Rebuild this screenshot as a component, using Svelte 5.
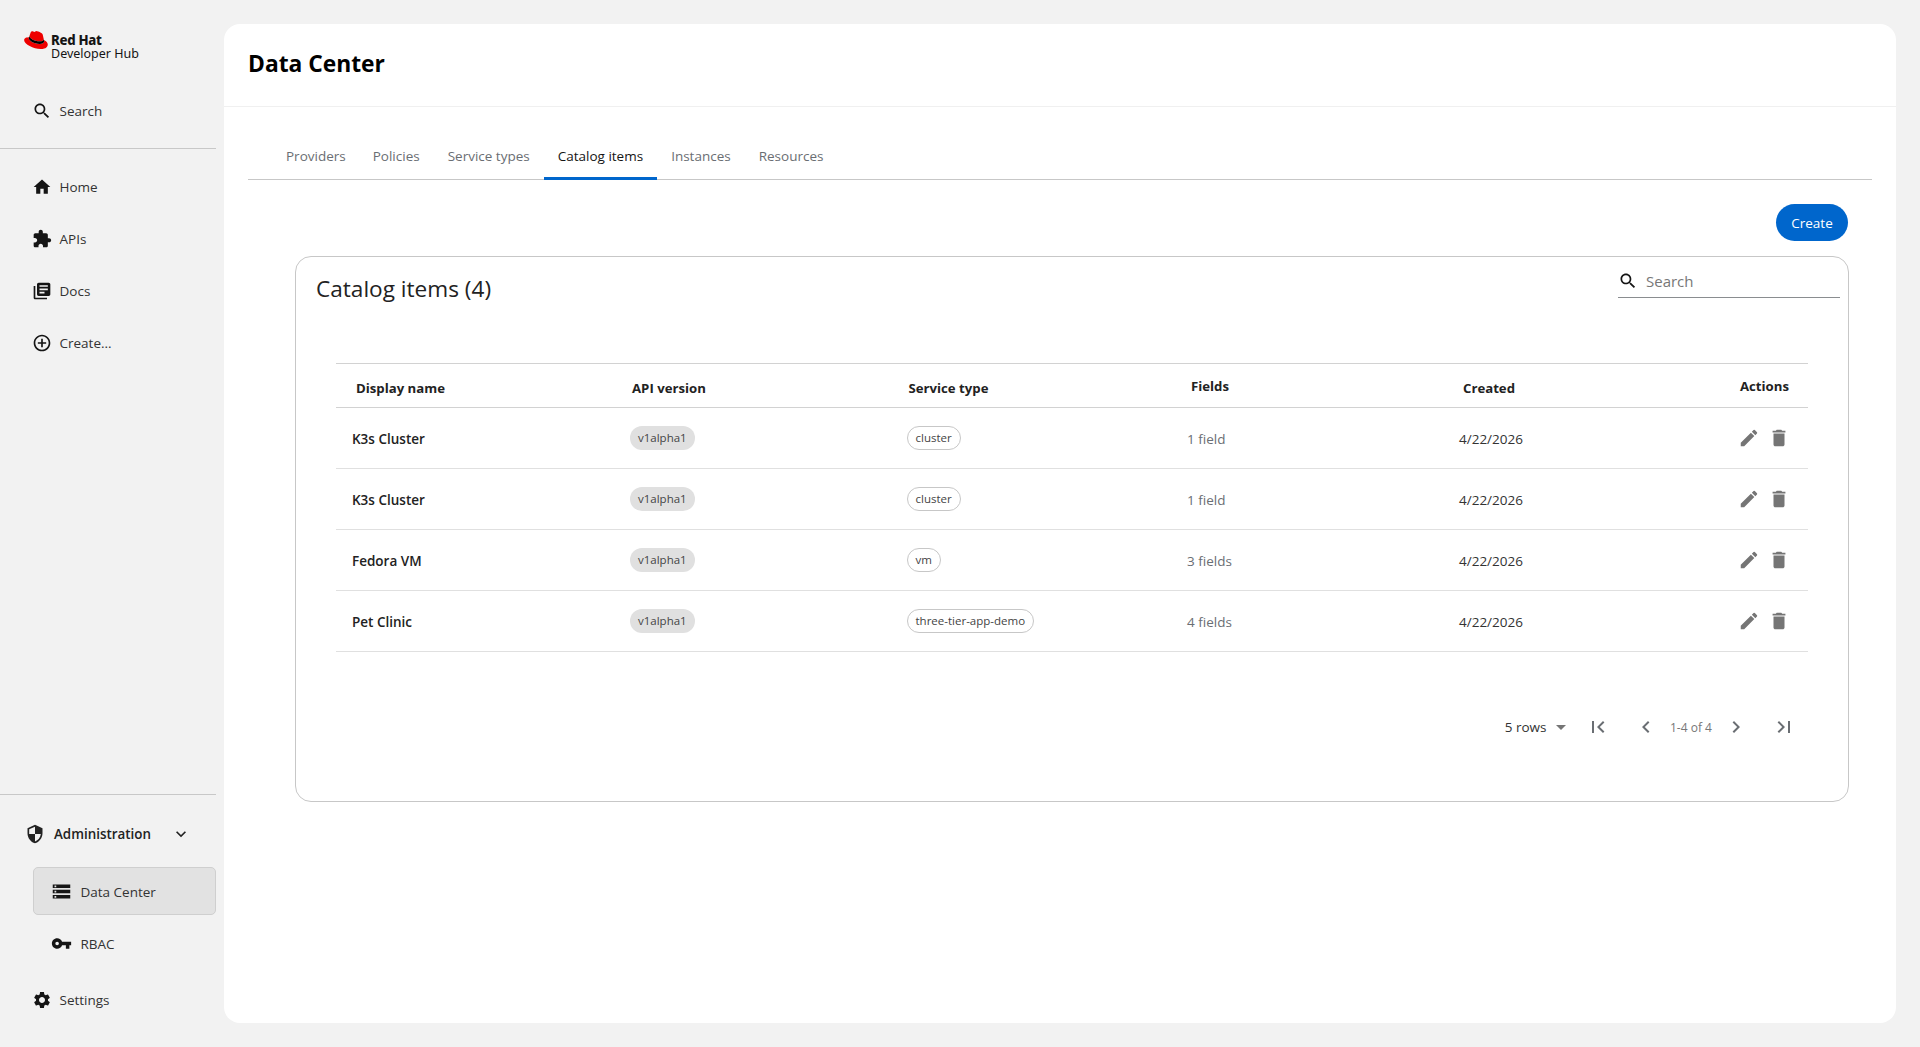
<script>
  const icons = {
    search: 'M15.5 14h-.79l-.28-.27C15.41 12.59 16 11.11 16 9.5 16 5.91 13.09 3 9.5 3S3 5.91 3 9.5 5.91 16 9.5 16c1.61 0 3.09-.59 4.23-1.57l.27.28v.79l5 4.99L20.49 19l-4.99-5zm-6 0C7.01 14 5 11.99 5 9.5S7.01 5 9.5 5 14 7.01 14 9.5 11.99 14 9.5 14z',
    home: 'M10 20v-6h4v6h5v-8h3L12 3 2 12h3v8z',
    puzzle: 'M20.5 11H19V7c0-1.1-.9-2-2-2h-4V3.5C13 2.12 11.88 1 10.5 1S8 2.12 8 3.5V5H4c-1.1 0-1.99.9-1.99 2v3.8H3.5c1.49 0 2.7 1.21 2.7 2.7s-1.21 2.7-2.7 2.7H2V20c0 1.1.9 2 2 2h3.8v-1.5c0-1.49 1.21-2.7 2.7-2.7 1.49 0 2.7 1.21 2.7 2.7V22H17c1.1 0 2-.9 2-2v-4h1.5c1.38 0 2.5-1.12 2.5-2.5S21.88 11 20.5 11z',
    docs: 'M4 6H2v14c0 1.1.9 2 2 2h14v-2H4V6zm16-4H8c-1.1 0-2 .9-2 2v12c0 1.1.9 2 2 2h12c1.1 0 2-.9 2-2V4c0-1.1-.9-2-2-2zm-1 9H9V9h10v2zm-4 4H9v-2h6v2zm4-8H9V5h10v2z',
    add: 'M13 7h-2v4H7v2h4v4h2v-4h4v-2h-4V7zm-1-5C6.48 2 2 6.48 2 12s4.48 10 10 10 10-4.48 10-10S17.52 2 12 2zm0 18c-4.41 0-8-3.59-8-8s3.59-8 8-8 8 3.59 8 8-3.59 8-8 8z',
    shield: 'M12 1L3 5v6c0 5.55 3.84 10.74 9 12 5.16-1.26 9-6.45 9-12V5l-9-4zm0 10.99h7c-.53 4.12-3.28 7.79-7 8.94V12H5V6.3l7-3.11v8.8z',
    expand: 'M16.59 8.59L12 13.17 7.41 8.59 6 10l6 6 6-6z',
    storage: 'M2 20h20v-4H2v4zm2-3h2v2H4v-2zM2 4v4h20V4H2zm4 3H4V5h2v2zm-4 7h20v-4H2v4zm2-3h2v2H4v-2z',
    key: 'M12.65 10C11.83 7.67 9.61 6 7 6c-3.31 0-6 2.69-6 6s2.69 6 6 6c2.61 0 4.83-1.67 5.65-4H17v4h4v-4h2v-4H12.65zM7 14c-1.1 0-2-.9-2-2s.9-2 2-2 2 .9 2 2-.9 2-2 2z',
    settings: 'M19.14 12.94c.04-.3.06-.61.06-.94 0-.32-.02-.64-.07-.94l2.03-1.58c.18-.14.23-.41.12-.61l-1.92-3.32c-.12-.22-.37-.29-.59-.22l-2.39.96c-.5-.38-1.03-.7-1.62-.94l-.36-2.54c-.04-.24-.24-.41-.48-.41h-3.84c-.24 0-.43.17-.47.41l-.36 2.54c-.59.24-1.13.57-1.62.94l-2.39-.96c-.22-.08-.47 0-.59.22L2.74 8.87c-.12.21-.08.47.12.61l2.03 1.58c-.05.3-.09.63-.09.94s.02.64.07.94l-2.03 1.58c-.18.14-.23.41-.12.61l1.92 3.32c.12.22.37.29.59.22l2.39-.96c.5.38 1.03.7 1.62.94l.36 2.54c.05.24.24.41.48.41h3.84c.24 0 .44-.17.47-.41l.36-2.54c.59-.24 1.13-.56 1.62-.94l2.39.96c.22.08.47 0 .59-.22l1.92-3.32c.12-.22.07-.47-.12-.61l-2.01-1.58zM12 15.6c-1.98 0-3.6-1.62-3.6-3.6s1.62-3.6 3.6-3.6 3.6 1.62 3.6 3.6-1.62 3.6-3.6 3.6z',
    edit: 'M3 17.25V21h3.75L17.81 9.94l-3.75-3.75L3 17.25zM20.71 7.04c.39-.39.39-1.02 0-1.41l-2.34-2.34a.9959.9959 0 0 0-1.41 0l-1.83 1.83 3.75 3.75 1.83-1.83z',
    trash: 'M6 19c0 1.1.9 2 2 2h8c1.1 0 2-.9 2-2V7H6v12zM19 4h-3.5l-1-1h-5l-1 1H5v2h14V4z',
    first: 'M18.41 16.59L13.82 12l4.59-4.59L17 6l-6 6 6 6zM6 6h2v12H6z',
    last: 'M5.59 7.41L10.18 12l-4.59 4.59L7 18l6-6-6-6zM16 6h2v12h-2z',
    prev: 'M15.41 7.41L14 6l-6 6 6 6 1.41-1.41L10.83 12z',
    next: 'M10 6L8.59 7.41 13.17 12l-4.58 4.59L10 18l6-6z',
    caret: 'M7 10l5 5 5-5z',
  };

  const navTop = [
    { label: 'Home', icon: 'home' },
    { label: 'APIs', icon: 'puzzle' },
    { label: 'Docs', icon: 'docs' },
    { label: 'Create...', icon: 'add' },
  ];

  const tabs = ['Providers', 'Policies', 'Service types', 'Catalog items', 'Instances', 'Resources'];

  const rows = [
    { name: 'K3s Cluster', type: 'cluster', fields: '1 field' },
    { name: 'K3s Cluster', type: 'cluster', fields: '1 field' },
    { name: 'Fedora VM', type: 'vm', fields: '3 fields' },
    { name: 'Pet Clinic', type: 'three-tier-app-demo', fields: '4 fields' },
  ];
</script>

{#snippet icon(name, size = 20)}
  <svg class="icon" width={size} height={size} viewBox="0 0 24 24" aria-hidden="true">
    <path d={icons[name]} />
  </svg>
{/snippet}

<div class="page">
  <nav class="nav">
    <div class="logo">
      <svg width="24" height="18" viewBox="0 0 192 145" aria-hidden="true">
        <path fill="#e00" d="M127.47 83.49c12.51 0 30.61-2.58 30.61-17.46a14 14 0 0 0-.31-3.42l-7.45-32.36c-1.72-7.12-3.23-10.35-15.73-16.6C124.89 8.69 103.76.5 97.51.5 91.69.5 90 8 83.06 8c-6.68 0-11.64-5.6-17.89-5.6-6 0-9.91 4.09-12.93 12.5 0 0-8.41 23.72-9.49 27.16A6.43 6.43 0 0 0 42.53 44c0 9.22 36.3 39.45 84.94 39.45M160 72.07c1.73 8.19 1.73 9.05 1.73 10.13 0 14-15.74 21.77-36.43 21.77C78.54 104 37.58 76.6 37.58 58.49a18.45 18.45 0 0 1 1.51-7.33C22.27 52 .5 54.3.5 74.22c0 31.48 74.59 70.28 133.65 70.28 45.28 0 56.7-20.48 56.7-36.65 0-12.72-11-27.16-30.83-35.78" />
        <path fill="#000" d="M160 72.07c1.73 8.19 1.73 9.05 1.73 10.13 0 14-15.74 21.77-36.43 21.77C78.54 104 37.58 76.6 37.58 58.49a18.45 18.45 0 0 1 1.51-7.33l3.66-9.06A6.43 6.43 0 0 0 42.53 44c0 9.22 36.3 39.45 84.94 39.45 12.51 0 30.61-2.58 30.61-17.46a14 14 0 0 0-.31-3.42Z" />
      </svg>
      <div class="logo__text">
        <span class="logo__brand">Red Hat</span>
        <span>Developer Hub</span>
      </div>
    </div>

    <div class="nav__item nav__search">
      {@render icon('search')}
      <span>Search</span>
    </div>

    <div class="nav__top">
      {#each navTop as item}
        <div class="nav__item">
          {@render icon(item.icon)}
          <span>{item.label}</span>
        </div>
      {/each}
    </div>

    <div class="nav__bottom">
      <div class="nav__admin">
        {@render icon('shield', 20)}
        <span>Administration</span>
        {@render icon('expand', 20)}
      </div>
      <div class="nav__sub nav__sub--active">
        {@render icon('storage', 21)}
        <span>Data Center</span>
      </div>
      <div class="nav__sub">
        {@render icon('key', 21)}
        <span>RBAC</span>
      </div>
      <div class="nav__item nav__settings">
        {@render icon('settings')}
        <span>Settings</span>
      </div>
    </div>
  </nav>

  <main class="main">
    <header class="main__header">
      <h1>Data Center</h1>
    </header>

    <div class="content">
      <div class="tabs">
        {#each tabs as tab}
          <div class="tab" class:tab--active={tab === 'Catalog items'}>{tab}</div>
        {/each}
      </div>

      <div class="toolbar">
        <button class="create">Create</button>
      </div>

      <section class="card">
        <div class="card__head">
          <h2>Catalog items (4)</h2>
          <div class="search">
            {@render icon('search', 20)}
            <span>Search</span>
          </div>
        </div>

        <div class="table">
          <div class="row row--head">
            <div class="th">Display name</div>
            <div class="th th--tight">API version</div>
            <div class="th th--tight">Service type</div>
            <div class="th th--up">Fields</div>
            <div class="th">Created</div>
            <div class="th th--up th--end">Actions</div>
          </div>
          {#each rows as row}
            <div class="row">
              <div class="cell cell--name">{row.name}</div>
              <div class="cell"><span class="chip chip--filled">v1alpha1</span></div>
              <div class="cell"><span class="chip chip--outline">{row.type}</span></div>
              <div class="cell cell--muted">{row.fields}</div>
              <div class="cell">4/22/2026</div>
              <div class="cell cell--actions">
                {@render icon('edit', 22)}
                {@render icon('trash', 22)}
              </div>
            </div>
          {/each}
        </div>

        <div class="pager">
          <div class="pager__select">
            <span>5 rows</span>
            {@render icon('caret', 24)}
          </div>
          <div class="pager__btn">{@render icon('first', 24)}</div>
          <div class="pager__btn">{@render icon('prev', 24)}</div>
          <span class="pager__count">1-4 of 4</span>
          <div class="pager__btn">{@render icon('next', 24)}</div>
          <div class="pager__btn">{@render icon('last', 24)}</div>
        </div>
      </section>
    </div>
  </main>
</div>

<style>
  :global(body) {
    margin: 0;
    background: #f2f2f2;
    color: #151515;
    font-family: 'Open Sans', 'Noto Sans', sans-serif;
    font-size: 13.5px;
  }

  * {
    box-sizing: border-box;
  }

  .icon {
    display: block;
    flex: none;
    fill: currentColor;
  }

  .page {
    display: flex;
    height: 1047px;
    overflow: hidden;
  }

  .nav {
    display: flex;
    flex-direction: column;
    flex: none;
    width: 216px;
    margin-right: 8px;
    color: #222;
  }

  .logo {
    display: flex;
    align-items: flex-start;
    gap: 3px;
    height: 87px;
    padding: 31px 0 0 24px;
  }

  .logo__text {
    display: flex;
    flex-direction: column;
    margin-top: 2px;
    font-family: 'Noto Sans', sans-serif;
    font-size: 12.5px;
    line-height: 14px;
    color: #151515;
  }

  .logo__brand {
    font-size: 13.2px;
    font-weight: 800;
    letter-spacing: -0.3px;
  }

  .nav__item {
    display: flex;
    align-items: center;
    gap: 7.5px;
    height: 52px;
    padding-left: 32px;
    color: #333;
  }

  .nav__item .icon {
    color: #151515;
  }

  .nav__search {
    height: 48px;
  }

  .nav__top {
    flex: 1;
    margin-top: 13px;
    padding-top: 12px;
    border-top: 1px solid #c8c8c8;
  }

  .nav__bottom {
    border-top: 1px solid #c8c8c8;
    padding-bottom: 22px;
  }

  .nav__admin {
    display: flex;
    align-items: center;
    height: 72px;
    padding: 6px 0 0 25px;
    font-weight: 600;
    color: #222;
  }

  .nav__admin span {
    width: 117px;
    margin-left: 9px;
    font-size: 13.4px;
  }

  .nav__sub {
    display: flex;
    align-items: center;
    gap: 9px;
    height: 48px;
    margin: 0 0 4px 33px;
    padding: 1px 0 0 16.5px;
    border: 1px solid transparent;
    border-radius: 5px;
    color: #333;
  }

  .nav__sub .icon {
    color: #151515;
  }

  .nav__sub--active {
    background: #e2e2e2;
    border-color: #cfcfcf;
  }

  .nav__settings {
    margin-top: 6px;
    padding-top: 2px;
  }

  .main {
    flex: 1;
    margin: 24px 24px 24px 0;
    background: #fff;
    border-radius: 16px;
    overflow: hidden;
  }

  .main__header {
    display: flex;
    align-items: center;
    height: 83px;
    padding: 0 24px;
    border-bottom: 1px solid #f0f0f0;
  }

  h1 {
    margin: 0 0 4px;
    font-size: 22.8px;
    font-weight: 700;
    color: #000;
  }

  .content {
    padding: 0 24px;
  }

  .tabs {
    display: flex;
    margin-top: 27px;
    padding-left: 24px;
    height: 46px;
    border-bottom: 1px solid #c7c7c7;
  }

  .tab {
    display: flex;
    align-items: center;
    height: 46px;
    padding: 0 14px 2px;
    color: #6a6e73;
  }

  .tab:first-child {
    padding-right: 13px;
  }

  .tab--active {
    padding-bottom: 0;
    color: #151515;
    border-bottom: 3px solid #0066cc;
  }

  .toolbar {
    display: flex;
    justify-content: flex-end;
    padding-top: 24px;
    padding-right: 24px;
  }

  .create {
    width: 72px;
    height: 37px;
    border: 0;
    border-radius: 19px;
    background: #0066cc;
    color: #fff;
    font: inherit;
  }

  .card {
    height: 546px;
    margin: 15px 23px 0 47px;
    border: 1px solid #c7c7c7;
    border-radius: 16px;
  }

  .card__head {
    display: flex;
    justify-content: space-between;
    align-items: flex-start;
    height: 106px;
    padding: 14px 8px 0 20px;
  }

  h2 {
    margin: 0;
    font-size: 22.6px;
    font-weight: 400;
    line-height: 36px;
    color: #222;
  }

  .search {
    display: flex;
    align-items: center;
    gap: 8px;
    width: 222px;
    height: 27px;
    padding-bottom: 6px;
    border-bottom: 1px solid #8a8d90;
    font-size: 15px;
    color: #777;
  }

  .search .icon {
    color: #151515;
  }

  .table {
    margin: 0 40px;
    border-top: 1px solid #d2d2d2;
  }

  .row {
    display: grid;
    grid-template-columns: 278px 276.5px 280.5px 272px 140px 1fr;
    align-items: center;
    height: 61px;
    padding-left: 16px;
    border-bottom: 1px solid #e0e0e0;
    color: #333;
  }

  .row--head {
    height: 44px;
    padding-top: 4px;
    border-bottom-color: #d2d2d2;
  }

  .th {
    padding-left: 4px;
    font-size: 13.2px;
    font-weight: 700;
    color: #222;
  }

  .th--tight {
    padding-left: 2px;
  }

  .th--up {
    margin-bottom: 4px;
  }

  .th--end {
    padding-right: 19px;
    text-align: right;
  }

  .cell {
    padding-top: 2px;
  }

  .cell--name {
    font-weight: 600;
    color: #222;
  }

  .cell--muted {
    color: #6a6e73;
  }

  .cell--actions {
    display: flex;
    justify-content: flex-end;
    gap: 8px;
    padding: 0 18px 0 0;
    color: #757575;
  }

  .chip {
    display: inline-flex;
    align-items: center;
    height: 24px;
    padding: 0 8px;
    margin-bottom: 3px;
    border-radius: 12px;
    font-size: 11.5px;
    vertical-align: middle;
  }

  .chip--filled {
    background: #e0e0e0;
    color: #444;
  }

  .chip--outline {
    border: 1px solid #c7c7c7;
    color: #444;
  }

  .pager {
    display: flex;
    justify-content: flex-end;
    align-items: center;
    height: 48px;
    margin: 51px 40px 0 0;
    color: #6a6e73;
  }

  .pager__select {
    display: flex;
    align-items: center;
    margin-right: 1px;
    color: #333;
  }

  .pager__select .icon {
    margin-left: 2.5px;
    color: #757575;
  }

  .pager__btn {
    display: flex;
    justify-content: center;
    align-items: center;
    width: 48px;
    height: 48px;
  }

  .pager__count {
    width: 42px;
    font-size: 12px;
    white-space: nowrap;
    color: #777;
  }
</style>
